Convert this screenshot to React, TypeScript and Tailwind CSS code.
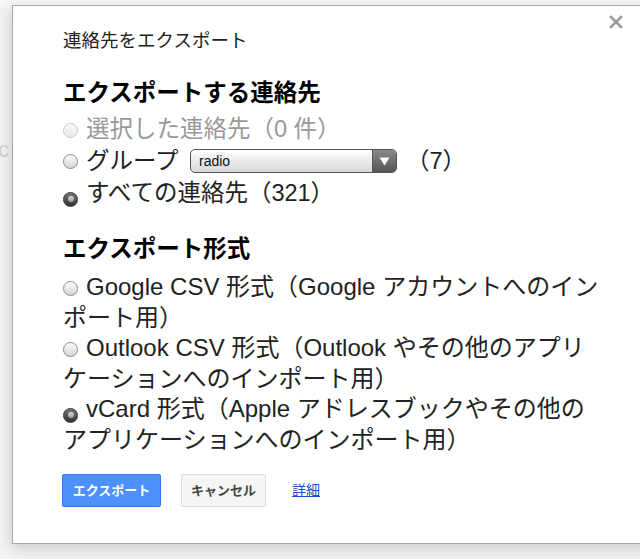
import React from "react";

const font = { fontFamily: '"Liberation Sans", "Noto Sans CJK JP", sans-serif' };

function Radio({ checked = false, disabled = false }: { checked?: boolean; disabled?: boolean }) {
  if (checked) {
    return (
      <span className="inline-flex items-center justify-center w-[15px] h-[15px] rounded-full bg-gradient-to-b from-[#777] to-[#333] border border-[#333] mr-[8px] align-[-1px]">
        <span className="w-[6px] h-[6px] rounded-full bg-gradient-to-b from-[#ddd] to-[#999]" />
      </span>
    );
  }
  return (
    <span
      className={
        disabled
          ? "inline-block w-[15px] h-[15px] rounded-full bg-gradient-to-b from-[#fafafa] to-[#e8e8e8] border border-[#c8c8c8] mr-[8px] align-[-1px]"
          : "inline-block w-[15px] h-[15px] rounded-full bg-gradient-to-b from-[#fdfdfd] to-[#d6d6d6] border border-[#8a8a8a] mr-[8px] align-[-1px]"
      }
    />
  );
}

export default function App() {
  return (
    <div className="relative w-[640px] h-[559px] overflow-hidden bg-[#f3f3f3]" style={font}>
      <div className="absolute left-0 top-0 w-[640px] h-[5px] bg-[#f7f7f7]" />
      <div className="absolute left-[-14px] top-[133px] text-[22px] text-[#d0d0d0]">oc</div>
      <div className="absolute left-[12px] top-[5px] w-[640px] h-[539px] bg-white border border-[#a8a8a8] shadow-[0_4px_14px_rgba(0,0,0,0.18)]">
        <div className="absolute left-[596px] top-[9px] w-[14px] h-[14px]">
          <svg width="14" height="14" viewBox="0 0 14 14">
            <path d="M2 2 L12 12 M12 2 L2 12" stroke="#9a9a9a" strokeWidth="2.6" strokeLinecap="square" />
          </svg>
        </div>
        <div className="pl-[50px] pt-[24px] text-[#222]">
          <div className="text-[18.5px] leading-[22px]">連絡先をエクスポート</div>
          <div className="mt-[27px] text-[23.5px] leading-[28px] font-bold text-black">エクスポートする連絡先</div>
          <div className="mt-[7px] text-[23.5px] text-[#222]">
            <div className="h-[31px] leading-[31px] text-[#999] whitespace-nowrap">
              <Radio disabled />選択した連絡先（0 件）
            </div>
            <div className="h-[32px] flex items-center whitespace-nowrap">
              <Radio />
              <span className="w-[104px] leading-[32px]">グループ</span>
              <div className="flex w-[207px] h-[24px] rounded-[5px] border border-[#555] overflow-hidden bg-gradient-to-b from-white to-[#d8d8d8]">
                <div className="flex-1 pl-[8px] text-[14px] leading-[22px] text-[#111]">radio</div>
                <div className="w-[24px] h-full flex items-center justify-center bg-gradient-to-b from-[#8a8a8a] to-[#555] border-l border-[#555]">
                  <svg width="11" height="9" viewBox="0 0 11 9">
                    <path d="M0.5 0.5 L10.5 0.5 L5.5 8.5 Z" fill="#fff" />
                  </svg>
                </div>
              </div>
              <span className="ml-[9px] leading-[32px]">（7）</span>
            </div>
            <div className="h-[32px] leading-[32px] whitespace-nowrap">
              <Radio checked />すべての連絡先（321）
            </div>
          </div>
          <div className="mt-[26px] text-[23.5px] leading-[28px] font-bold text-black">エクスポート形式</div>
          <div className="mt-[9px] text-[24px] leading-[30.5px] text-[#222] whitespace-nowrap">
            <div>
              <Radio />Google CSV 形式（Google アカウントへのイン<br />ポート用）
            </div>
            <div>
              <Radio />Outlook CSV 形式（Outlook やその他のアプリ<br />ケーションへのインポート用）
            </div>
            <div>
              <Radio checked />vCard 形式（Apple アドレスブックやその他の<br />アプリケーションへのインポート用）
            </div>
          </div>
          <div className="mt-[19px] flex items-center">
            <button className="ml-[-1px] w-[99px] h-[33px] rounded-[2px] bg-[#4d90fe] border border-[#3079ed] text-white text-[13px] font-bold">
              エクスポート
            </button>
            <button className="ml-[20px] w-[85px] h-[33px] rounded-[2px] bg-[#f5f5f5] border border-[#dcdcdc] text-[#444] text-[13px] font-bold">
              キャンセル
            </button>
            <a className="ml-[26px] text-[14px] text-[#1155cc] underline">詳細</a>
          </div>
        </div>
      </div>
    </div>
  );
}
